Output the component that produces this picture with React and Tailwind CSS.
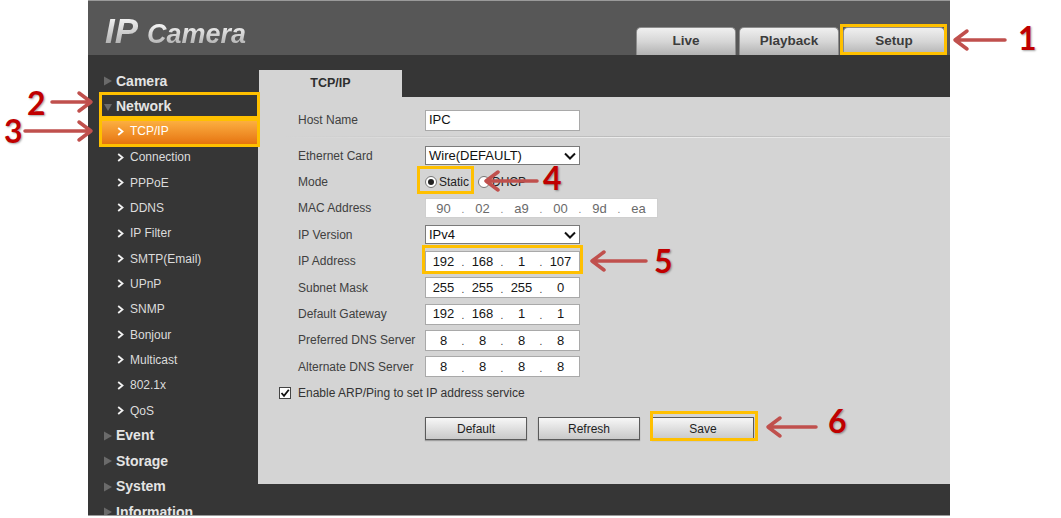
import React from "react";

function Tri({ open }) {
  return (
    <svg width="10" height="10" viewBox="0 0 10 10" className="shrink-0">
      {open ? (
        <path d="M1 2 L9 2 L5 9 Z" fill="#6a6a6a" />
      ) : (
        <path d="M1 0.5 L9 5 L1 9.5 Z" fill="#6a6a6a" />
      )}
    </svg>
  );
}

function Chev({ color = "#f2f2f2" }) {
  return (
    <svg width="7" height="9" viewBox="0 0 7 9" className="shrink-0">
      <path d="M1.2 1 L5.5 4.5 L1.2 8" fill="none" stroke={color} strokeWidth="1.8" />
    </svg>
  );
}

function TopItem({ label, open }) {
  return (
    <div className="h-[25.35px] flex items-center pl-[3px]">
      <Tri open={open} />
      <span className="ml-[3px] text-[14px] font-bold text-[#e4e4e4]">{label}</span>
    </div>
  );
}

function SubItem({ label, active }) {
  if (active) {
    return (
      <div className="h-[25.35px] flex items-center pl-[17px] bg-linear-to-b from-[#fdb443] to-[#e6740c] border-b border-dotted border-[#5a3000]">
        <Chev color="#ffffff" />
        <span className="ml-[6px] text-[12px] text-white">{label}</span>
      </div>
    );
  }
  return (
    <div className="h-[25.35px] flex items-center pl-[17px]">
      <Chev />
      <span className="ml-[6px] text-[12px] text-[#dcdcdc]">{label}</span>
    </div>
  );
}

function Sidebar() {
  const subs = ["Connection", "PPPoE", "DDNS", "IP Filter", "SMTP(Email)", "UPnP", "SNMP", "Bonjour", "Multicast", "802.1x", "QoS"];
  return (
    <div className="w-[170px] shrink-0 pt-[13.5px] pl-[12px] overflow-hidden">
      <TopItem label="Camera" />
      <TopItem label="Network" open />
      <SubItem label="TCP/IP" active />
      {subs.map((s) => (
        <SubItem key={s} label={s} />
      ))}
      <TopItem label="Event" />
      <TopItem label="Storage" />
      <TopItem label="System" />
      <TopItem label="Information" />
    </div>
  );
}

function Label({ children }) {
  return <div className="w-[127px] shrink-0 text-[12px] text-[#404040]">{children}</div>;
}

function Select({ value }) {
  return (
    <div className="w-[155px] h-[19px] border border-[#7a7a7a] bg-white flex items-center justify-between pl-[3px] pr-[2px]">
      <span className="text-[13px] text-[#111]">{value}</span>
      <svg width="14" height="10" viewBox="0 0 14 10">
        <path d="M2 2.5 L7 7.5 L12 2.5" fill="none" stroke="#111" strokeWidth="2" />
      </svg>
    </div>
  );
}

function Segs({ values, gray }) {
  return (
    <div className="flex items-center pl-[1px]">
      {values.map((v, i) => (
        <React.Fragment key={i}>
          {i > 0 && (
            <span className={`w-[6px] text-center text-[10px] leading-none pt-[4px] ${gray ? "text-[#777]" : "text-[#333]"}`}>.</span>
          )}
          <span className={`w-[33px] text-center text-[13px] ${gray ? "text-[#6a6a6a]" : "text-[#151515]"}`}>{v}</span>
        </React.Fragment>
      ))}
    </div>
  );
}

function IpBox({ values }) {
  return (
    <div className="w-[155px] h-[21px] border border-[#a9a9a9] bg-white flex items-center">
      <Segs values={values} />
    </div>
  );
}

function Row({ label, children, h = "h-[26.4px]" }) {
  return (
    <div className={`${h} flex items-center`}>
      <Label>{label}</Label>
      {children}
    </div>
  );
}

function Radio({ checked }) {
  return (
    <span className="w-[12px] h-[12px] rounded-full border border-[#777] bg-white flex items-center justify-center shrink-0">
      {checked && <span className="w-[6px] h-[6px] rounded-full bg-[#222]" />}
    </span>
  );
}

function Btn({ children }) {
  return (
    <div className="w-[102px] h-[23px] border border-[#5a5a5a] bg-linear-to-b from-[#f7f7f7] to-[#c9c9c9] flex items-center justify-center text-[12px] text-[#1e1e1e] shadow-[0_1px_1px_rgba(0,0,0,0.25)]">
      {children}
    </div>
  );
}

function Main() {
  return (
    <div className="flex-1 pt-[15px] flex flex-col">
      <div className="h-[27px] flex">
        <div className="w-[143px] ml-[1px] bg-[#d4d4d4] flex items-center justify-center text-[12.5px] font-bold text-[#2e2e2e]">
          TCP/IP
        </div>
      </div>
      <div className="h-[387px] bg-[#d4d4d4] pl-[40px] pt-[10px]">
        <Row label="Host Name" h="h-[26px]">
          <div className="w-[155px] h-[21px] border border-[#a9a9a9] bg-white flex items-center pl-[3px] text-[13px] text-[#111]">
            IPC
          </div>
        </Row>
        <div className="h-[9.5px] pt-[3px] -ml-[13px]">
          <div className="h-px bg-linear-to-r from-[#d4d4d4] via-[#bcbcbc] to-[#c8c8c8]" />
          <div className="h-px bg-linear-to-r from-[#d4d4d4] via-[#ececec] to-[#e2e2e2]" />
        </div>
        <Row label="Ethernet Card">
          <Select value="Wire(DEFAULT)" />
        </Row>
        <Row label="Mode">
          <div className="flex items-center text-[12px] text-[#222]">
            <Radio checked />
            <span className="ml-[2px]">Static</span>
            <span className="ml-[9px]">
              <Radio />
            </span>
            <span className="ml-[2px]">DHCP</span>
          </div>
        </Row>
        <Row label="MAC Address">
          <div className="w-[233px] h-[20px] border border-[#cfcfcf] bg-white flex items-center">
            <Segs values={["90", "02", "a9", "00", "9d", "ea"]} gray />
          </div>
        </Row>
        <Row label="IP Version">
          <Select value="IPv4" />
        </Row>
        <Row label="IP Address">
          <IpBox values={["192", "168", "1", "107"]} />
        </Row>
        <Row label="Subnet Mask">
          <IpBox values={["255", "255", "255", "0"]} />
        </Row>
        <Row label="Default Gateway">
          <IpBox values={["192", "168", "1", "1"]} />
        </Row>
        <Row label="Preferred DNS Server">
          <IpBox values={["8", "8", "8", "8"]} />
        </Row>
        <Row label="Alternate DNS Server">
          <IpBox values={["8", "8", "8", "8"]} />
        </Row>
        <div className="h-[26.4px] flex items-center -ml-[19px]">
          <span className="w-[12px] h-[12px] border border-[#444] bg-white flex items-center justify-center">
            <svg width="10" height="10" viewBox="0 0 10 10">
              <path d="M1.5 5 L4 7.8 L8.8 1.8" fill="none" stroke="#111" strokeWidth="1.8" />
            </svg>
          </span>
          <span className="ml-[7px] text-[12px] text-[#333]">Enable ARP/Ping to set IP address service</span>
        </div>
        <div className="mt-[11px] ml-[127px] flex">
          <Btn>Default</Btn>
          <div className="ml-[11px]">
            <Btn>Refresh</Btn>
          </div>
          <div className="ml-[12px]">
            <Btn>Save</Btn>
          </div>
        </div>
      </div>
    </div>
  );
}

function Tab({ children, w = "w-[100px]" }) {
  return (
    <div className={`${w} h-[28px] rounded-t-[5px] border border-b-0 border-[#8c8c8c] bg-linear-to-b from-[#f0f0f0] via-[#d6d6d6] to-[#b2b2b2] flex items-center justify-center text-[13.5px] font-bold text-[#3c3c3c]`}>
      {children}
    </div>
  );
}

function Header() {
  return (
    <div className="h-[55px] shrink-0 bg-[#575757] border-t border-[#9a9a9a] flex justify-between pl-[17px] pr-[5px]">
      <div className="mt-[12px] flex items-baseline italic font-bold leading-none">
        <span className="text-[35px] bg-linear-to-b from-white to-[#a8a8a8] bg-clip-text text-transparent">IP</span>
        <span className="ml-[9px] text-[27px] bg-linear-to-b from-white to-[#a8a8a8] bg-clip-text text-transparent">Camera</span>
      </div>
      <div className="flex items-end">
        <Tab>Live</Tab>
        <div className="ml-[3px]">
          <Tab>Playback</Tab>
        </div>
        <div className="ml-[4px]">
          <Tab w="w-[102px]">Setup</Tab>
        </div>
      </div>
    </div>
  );
}

function Num({ n, className }) {
  return (
    <div
      className={`absolute text-[32px] leading-none font-bold text-[#c00000] font-['Lato','Open_Sans',sans-serif] [text-shadow:1px_1px_2px_rgba(0,0,0,0.35)] ${className}`}
    >
      {n}
    </div>
  );
}

function Annotations() {
  return (
    <>
      <div className="absolute left-[840px] top-[24px] w-[107px] h-[31px] border-[3px] border-[#ffc000]" />
      <div className="absolute left-[99px] top-[92px] w-[161px] h-[27px] border-[3px] border-[#ffc000]" />
      <div className="absolute left-[99px] top-[118px] w-[161px] h-[29px] border-[3px] border-[#ffc000]" />
      <div className="absolute left-[417px] top-[166px] w-[57px] h-[28px] border-[3px] border-[#ffc000]" />
      <div className="absolute left-[422px] top-[245px] w-[161px] h-[29px] border-[3px] border-[#ffc000]" />
      <div className="absolute left-[650px] top-[411px] w-[108px] h-[30px] border-[3px] border-[#ffc000]" />
      <svg className="absolute left-0 top-0 pointer-events-none" width="1061" height="518">
        <g stroke="#c0504d" strokeWidth="3.5" fill="none" strokeLinecap="round" strokeLinejoin="round">
          <path d="M1005 40 H955 M967 31 L955 40 L967 49" />
          <path d="M52 102 H91 M79 93 L91 102 L79 111" />
          <path d="M25 131 H91 M79 122 L91 131 L79 140" />
          <path d="M537 181 H486 M498 172 L486 181 L498 190" />
          <path d="M646 261 H592 M604 252 L592 261 L604 270" />
          <path d="M816 427 H768 M780 418 L768 427 L780 436" />
        </g>
      </svg>
      <Num n="1" className="left-[1018px] top-[22px]" />
      <Num n="2" className="left-[27px] top-[87px]" />
      <Num n="3" className="left-[4px] top-[115px]" />
      <Num n="4" className="left-[543px] top-[162px]" />
      <Num n="5" className="left-[654px] top-[245px]" />
      <Num n="6" className="left-[828px] top-[405px]" />
    </>
  );
}

export default function App() {
  return (
    <div className="relative w-[1061px] h-[518px] bg-white overflow-hidden font-['Liberation_Sans',Arial,sans-serif]">
      <div className="ml-[88px] w-[862px] h-[516px] flex flex-col bg-[#363636] border-b border-[#9a9a9a]">
        <Header />
        <div className="flex flex-1 min-h-0 overflow-hidden">
          <Sidebar />
          <Main />
        </div>
      </div>
      <Annotations />
    </div>
  );
}
